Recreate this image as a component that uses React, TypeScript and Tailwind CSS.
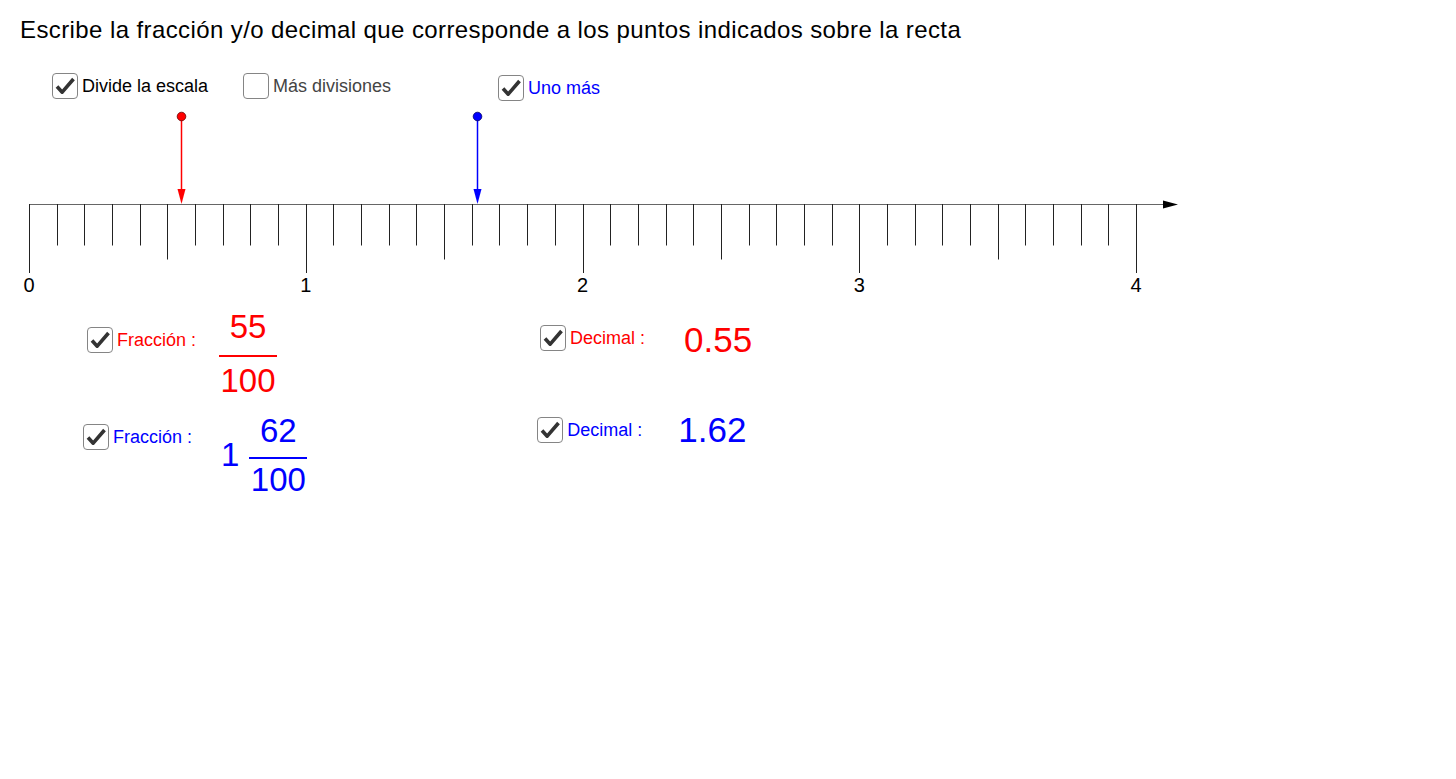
import React from 'react';

const RED = '#ff0000';
const BLUE = '#0000ff';

const Check: React.FC<{ checked?: boolean }> = ({ checked = true }) => (
  <div className="w-[26px] h-[26px] shrink-0 rounded-[4px] border-[1.5px] border-[#858585] bg-white flex items-center justify-center">
    {checked && (
      <svg width="22" height="22" viewBox="0 0 22 22">
        <path d="M3 11.5 L8.2 17.2 L19.5 4" fill="none" stroke="#333" strokeWidth="3.6" strokeLinejoin="round" />
      </svg>
    )}
  </div>
);

const Fraction: React.FC<{ num: string; den: string; color: string; gapTop: string; gapBottom: string }> = ({
  num,
  den,
  color,
  gapTop,
  gapBottom,
}) => (
  <div className="flex flex-col items-center w-[58px] text-[33px] leading-none" style={{ color }}>
    <span>{num}</span>
    <div className={`w-full h-[2px] ${gapTop}`} style={{ backgroundColor: color }} />
    <span className={gapBottom}>{den}</span>
  </div>
);

const NumberLine: React.FC = () => {
  const x0 = 29;
  const step = 27.675;
  const ticks = Array.from({ length: 41 }, (_, i) => i);
  const px = (v: number) => x0 + v * step * 10;

  return (
    <svg width="1456" height="200" viewBox="0 0 1456 200" className="block">
      {/* axis */}
      <line x1={x0} y1={104.5} x2={1166} y2={104.5} stroke="#666" strokeWidth="1" />
      <polygon points="1163,100.5 1178,104.5 1163,108.5" fill="#000" />
      {ticks.map((i) => {
        const x = Math.round(x0 + i * step) + 0.5;
        const end = i % 10 === 0 ? 173 : i % 5 === 0 ? 159.5 : 145.5;
        return <line key={i} x1={x} y1={104} x2={x} y2={end} stroke="#222" strokeWidth="1" />;
      })}
      {[0, 1, 2, 3, 4].map((n) => (
        <text
          key={n}
          x={px(n)}
          y={192}
          textAnchor="middle"
          fontSize="20"
          fontFamily="'Liberation Sans', Arial, sans-serif"
          fill="#000"
        >
          {n}
        </text>
      ))}

      {/* red point 0.55 */}
      <line x1={181.5} y1={17} x2={181.5} y2={92} stroke={RED} strokeWidth="1.5" />
      <polygon points="177.5,89 185.5,89 181.5,104" fill={RED} />
      <circle cx={181.5} cy={16.5} r={4.3} fill={RED} stroke="#660000" strokeWidth="0.8" />

      {/* blue point 1.62 */}
      <line x1={477.5} y1={17} x2={477.5} y2={92} stroke={BLUE} strokeWidth="1.5" />
      <polygon points="473.5,89 481.5,89 477.5,104" fill={BLUE} />
      <circle cx={477.5} cy={16.5} r={4.3} fill={BLUE} stroke="#000066" strokeWidth="0.8" />
    </svg>
  );
};

const App: React.FC = () => {
  return (
    <div className="min-h-screen w-full bg-white font-['Liberation_Sans',Arial,sans-serif] text-black">
      <h1 className="pt-[18px] pl-5 text-[24px] leading-none tracking-[0.4px] font-normal">
        Escribe la fracción y/o decimal que corresponde a los puntos indicados sobre la recta
      </h1>

      {/* toggles */}
      <div className="mt-[31px] h-[27px] pl-[52px] flex items-start text-[18px] leading-none">
        <div className="w-[191px] flex items-center gap-1">
          <Check />
          <span>Divide la escala</span>
        </div>
        <div className="w-[255px] flex items-center gap-1">
          <Check checked={false} />
          <span className="text-[#444]">Más divisiones</span>
        </div>
        <div className="mt-[2px] flex items-center gap-1" style={{ color: BLUE }}>
          <Check />
          <span>Uno más</span>
        </div>
      </div>

      <NumberLine />

      {/* answers, first point */}
      <div className="h-[100px] pl-[87px] flex items-start">
        <div className="mt-[27px] w-[132px] flex items-center gap-1 text-[18px] leading-none" style={{ color: RED }}>
          <Check />
          <span>Fracción :</span>
        </div>
        <div className="mt-[10px]">
          <Fraction num="55" den="100" color={RED} gapTop="mt-[12px]" gapBottom="mt-[7px]" />
        </div>
        <div className="ml-[263px] mt-[25px] flex items-start" style={{ color: RED }}>
          <div className="w-[144px] flex items-center gap-1 text-[18px] leading-none">
            <Check />
            <span>Decimal :</span>
          </div>
          <span className="-mt-[3px] text-[35px] leading-none">0.55</span>
        </div>
      </div>

      {/* answers, second point */}
      <div className="h-[100px] pl-[83px] flex items-start">
        <div className="mt-[24px] w-[138px] flex items-center gap-1 text-[18px] leading-none" style={{ color: BLUE }}>
          <Check />
          <span>Fracción :</span>
        </div>
        <div className="mt-[14px] flex items-start" style={{ color: BLUE }}>
          <span className="mt-[24px] text-[33px] leading-none">1</span>
          <div className="ml-[10px]">
            <Fraction num="62" den="100" color={BLUE} gapTop="mt-[10px]" gapBottom="mt-[4px]" />
          </div>
        </div>
        <div className="ml-[230px] mt-[17px] flex items-start" style={{ color: BLUE }}>
          <div className="w-[141px] flex items-center gap-1 text-[18px] leading-none">
            <Check />
            <span>Decimal :</span>
          </div>
          <span className="-mt-[5px] text-[35px] leading-none">1.62</span>
        </div>
      </div>
    </div>
  );
};

export default App;
